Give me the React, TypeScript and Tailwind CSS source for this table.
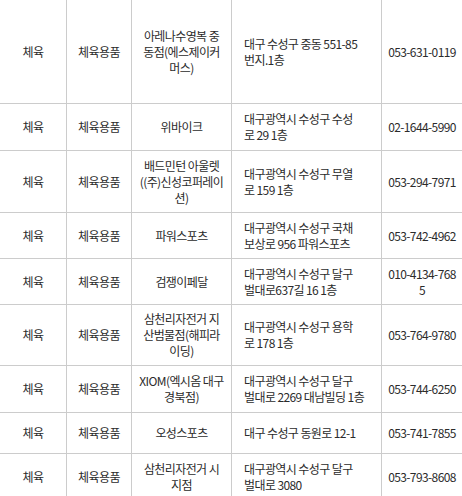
const rows = [
  {
    h: "h-[104px]",
    name: ["아레나수영복 중", "동점(에스제이커", "머스)"],
    addr: ["대구 수성구 중동 551-85", "번지.1층"],
    tel: ["053-631-0119"],
  },
  {
    h: "h-[47px]",
    name: ["위바이크"],
    addr: ["대구광역시 수성구 수성", "로 29 1층"],
    tel: ["02-1644-5990"],
  },
  {
    h: "h-[62px]",
    name: ["배드민턴 아울렛", "((주)신성코퍼레이", "션)"],
    addr: ["대구광역시 수성구 무열", "로 159 1층"],
    tel: ["053-294-7971"],
  },
  {
    h: "h-[46px]",
    name: ["파워스포츠"],
    addr: ["대구광역시 수성구 국채", "보상로 956 파워스포츠"],
    tel: ["053-742-4962"],
  },
  {
    h: "h-[46px]",
    name: ["검쟁이페달"],
    addr: ["대구광역시 수성구 달구", "벌대로637길 16 1층"],
    tel: ["010-4134-768", "5"],
  },
  {
    h: "h-[61px]",
    name: ["삼천리자전거 지", "산범물점(해피라", "이딩)"],
    addr: ["대구광역시 수성구 용학", "로 178 1층"],
    tel: ["053-764-9780"],
  },
  {
    h: "h-[47px]",
    name: ["XIOM(엑시옴 대구", "경북점)"],
    addr: ["대구광역시 수성구 달구", "벌대로 2269 대남빌딩 1층"],
    tel: ["053-744-6250"],
  },
  {
    h: "h-[41px]",
    name: ["오성스포츠"],
    addr: ["대구 수성구 동원로 12-1"],
    tel: ["053-741-7855"],
  },
  {
    h: "h-[47px]",
    name: ["삼천리자전거 시", "지점"],
    addr: ["대구광역시 수성구 달구", "벌대로 3080"],
    tel: ["053-793-8608"],
  },
];

function Lines({ lines }: { lines: string[] }) {
  return (
    <div>
      {lines.map((l, i) => (
        <div key={i} className="whitespace-nowrap">
          {l}
        </div>
      ))}
    </div>
  );
}

export default function App() {
  return (
    <div
      className="h-[496px] w-[462px] overflow-hidden bg-white text-[12px] leading-[16px] tracking-[-0.6px] text-[#2b2b2b]"
      style={{ fontFamily: '"Noto Sans CJK KR", "Noto Sans", sans-serif' }}
    >
      {rows.map((r, i) => (
        <div
          key={i}
          className={`grid grid-cols-[67px_65px_100px_150px_80px] ${r.h}`}
        >
          <div className="flex items-center justify-center border-r border-b border-[#cccccc]">
            체육
          </div>
          <div className="flex items-center justify-center border-r border-b border-[#cccccc]">
            체육용품
          </div>
          <div className="flex items-center justify-center border-r border-b border-[#cccccc] text-center">
            <Lines lines={r.name} />
          </div>
          <div className="flex items-center border-r border-b border-[#cccccc] pl-[12px]">
            <Lines lines={r.addr} />
          </div>
          <div className="flex items-center justify-center border-b border-[#cccccc] text-center">
            <Lines lines={r.tel} />
          </div>
        </div>
      ))}
    </div>
  );
}
